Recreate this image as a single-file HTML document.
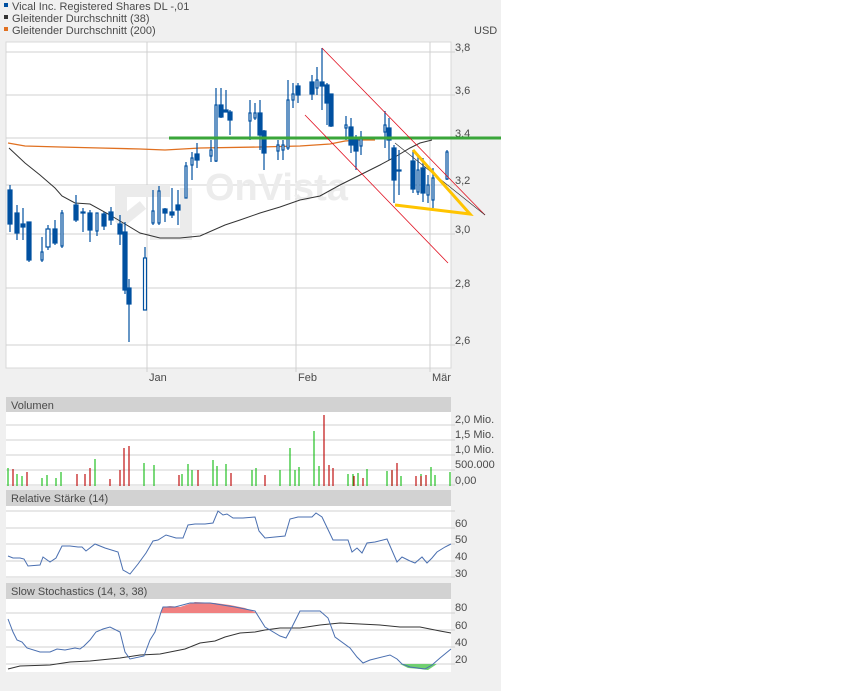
<!DOCTYPE html>
<html><head><meta charset="utf-8"><style>
html,body{margin:0;padding:0;background:#fff}
svg{display:block}
text{font-family:"Liberation Sans",sans-serif;font-size:11px;fill:#4a4a4a}
</style></head><body>
<svg width="850" height="691" xmlns="http://www.w3.org/2000/svg">
<rect x="0" y="0" width="501" height="691" fill="#f0f0f0"/>
<rect x="4" y="3" width="4" height="4" fill="#0050a0"/><text x="12" y="10">Vical Inc. Registered Shares DL -,01</text>
<rect x="4" y="15" width="4" height="4" fill="#333"/><text x="12" y="22">Gleitender Durchschnitt (38)</text>
<rect x="4" y="27" width="4" height="4" fill="#e07020"/><text x="12" y="34">Gleitender Durchschnitt (200)</text>
<text x="474" y="34">USD</text>
<rect x="6" y="42" width="445" height="326" fill="#fff" stroke="#d8d8d8"/>
<g stroke="#d0d0d0" stroke-width="1">
<line x1="6" y1="52" x2="455" y2="52"/><line x1="6" y1="95" x2="455" y2="95"/><line x1="6" y1="138" x2="455" y2="138"/>
<line x1="6" y1="185" x2="455" y2="185"/><line x1="6" y1="234" x2="455" y2="234"/><line x1="6" y1="288" x2="455" y2="288"/>
<line x1="6" y1="345" x2="455" y2="345"/>
<line x1="147" y1="42" x2="147" y2="372"/><line x1="296" y1="42" x2="296" y2="372"/><line x1="430" y1="42" x2="430" y2="372"/>
</g>
<g fill="#ebebeb">
<path d="M115 185 h55 v12 h-43 v23 l-12 0z"/>
<path d="M118 225 l25 -20" stroke="#ebebeb" stroke-width="10"/>
<path d="M150 228 h30 v-40 h12 v52 h-42z"/>
</g>
<text x="205" y="200" style="font-size:38px;font-weight:bold;fill:#ececec">OnVista</text>
<g font-size="11">
<text x="455" y="51">3,8</text><text x="455" y="94">3,6</text><text x="455" y="137">3,4</text>
<text x="455" y="184">3,2</text><text x="455" y="233">3,0</text><text x="455" y="287">2,8</text><text x="455" y="344">2,6</text>
<text x="149" y="381">Jan</text><text x="298" y="381">Feb</text><text x="432" y="381">Mär</text>
</g>
<polyline fill="none" stroke="#e07020" stroke-width="1.3" points="8,143 25,146 60,147 100,148 140,149 165,150 200,148 260,147 300,146 330,144 345,141 360,140 375,140"/>
<polyline fill="none" stroke="#333" stroke-width="1" points="9,148 25,163 40,175 55,188 62,196 75,203 90,204 110,215 125,224 140,233 160,238 180,238 200,236 225,225 240,220 260,213 280,207 300,200 320,196 340,185 360,175 380,165 395,157 410,148 420,143 432,140"/>
<g stroke="#0050a0" stroke-width="1.2" fill="#0050a0">
<line x1="10" y1="185" x2="10" y2="232"/><rect x="8" y="190" width="4" height="34"/>
<line x1="17" y1="205" x2="17" y2="240"/><rect x="15" y="213" width="4" height="20"/>
<line x1="23" y1="208" x2="23" y2="240"/><rect x="21" y="224" width="4" height="3"/>
<line x1="29" y1="222" x2="29" y2="262"/><rect x="27" y="222" width="4" height="38"/>
<line x1="42" y1="237" x2="42" y2="262"/><rect x="41" y="252" width="2" height="8" fill="#fff"/>
<line x1="48" y1="225" x2="48" y2="250"/><rect x="46" y="229" width="4" height="18" fill="#fff"/>
<line x1="55" y1="220" x2="55" y2="245"/><rect x="53" y="229" width="4" height="14"/>
<line x1="62" y1="210" x2="62" y2="248"/><rect x="61" y="213" width="2" height="33" fill="#fff"/>
<line x1="76" y1="195" x2="76" y2="222"/><rect x="74" y="205" width="4" height="15"/>
<line x1="83" y1="208" x2="83" y2="232"/><rect x="81" y="212" width="4" height="1"/>
<line x1="90" y1="210" x2="90" y2="242"/><rect x="88" y="213" width="4" height="17"/>
<line x1="97" y1="213" x2="97" y2="236"/><rect x="96" y="213" width="2" height="18" fill="#fff"/>
<line x1="104" y1="212" x2="104" y2="230"/><rect x="102" y="214" width="4" height="12"/>
<line x1="111" y1="207" x2="111" y2="225"/><rect x="109" y="212" width="4" height="8"/>
<line x1="120" y1="215" x2="120" y2="245"/><rect x="118" y="224" width="4" height="10"/>
<line x1="125" y1="222" x2="125" y2="294"/><rect x="123" y="232" width="4" height="58"/>
<line x1="129" y1="279" x2="129" y2="342"/><rect x="127" y="288" width="4" height="16"/>
<line x1="145" y1="247" x2="145" y2="310"/><rect x="143.5" y="258" width="3" height="52" fill="#fff"/>
<line x1="153" y1="190" x2="153" y2="225"/><rect x="152" y="211" width="2" height="12" fill="#fff"/>
<line x1="159" y1="186" x2="159" y2="225"/><rect x="158" y="191" width="2" height="32" fill="#fff"/>
<line x1="165" y1="208" x2="165" y2="222"/><rect x="163" y="209" width="4" height="4"/>
<line x1="172" y1="188" x2="172" y2="218"/><rect x="170" y="212" width="4" height="3"/>
<line x1="178" y1="190" x2="178" y2="225"/><rect x="176" y="205" width="4" height="5"/>
<line x1="186" y1="162" x2="186" y2="198"/><rect x="185" y="166" width="2" height="32" fill="#fff"/>
<line x1="192" y1="152" x2="192" y2="180"/><rect x="191" y="158" width="2" height="7" fill="#fff"/>
<line x1="197" y1="143" x2="197" y2="168"/><rect x="195" y="154" width="4" height="6"/>
<line x1="211" y1="140" x2="211" y2="162"/><rect x="210" y="150" width="2" height="6" fill="#fff"/>
<line x1="216" y1="88" x2="216" y2="162"/><rect x="215" y="105" width="2" height="56" fill="#fff"/>
<line x1="221" y1="88" x2="221" y2="118"/><rect x="219" y="105" width="4" height="12"/>
<line x1="226" y1="90" x2="226" y2="112"/><rect x="224" y="110" width="4" height="2"/>
<line x1="230" y1="110" x2="230" y2="135"/><rect x="228" y="112" width="4" height="8"/>
<line x1="250" y1="100" x2="250" y2="140"/><rect x="249" y="113" width="2" height="8" fill="#fff"/>
<line x1="255" y1="103" x2="255" y2="120"/><rect x="254" y="113" width="2" height="5" fill="#fff"/>
<line x1="260" y1="100" x2="260" y2="150"/><rect x="258" y="113" width="4" height="22"/>
<line x1="264" y1="130" x2="264" y2="170"/><rect x="262" y="131" width="4" height="22"/>
<line x1="278" y1="140" x2="278" y2="160"/><rect x="277" y="145" width="2" height="6" fill="#fff"/>
<line x1="283" y1="140" x2="283" y2="160"/><rect x="282" y="145" width="2" height="5" fill="#fff"/>
<line x1="288" y1="80" x2="288" y2="150"/><rect x="287" y="100" width="2" height="48" fill="#fff"/>
<line x1="293" y1="83" x2="293" y2="108"/><rect x="292" y="94" width="2" height="6" fill="#fff"/>
<line x1="298" y1="83" x2="298" y2="103"/><rect x="296" y="86" width="4" height="9"/>
<line x1="312" y1="75" x2="312" y2="100"/><rect x="310" y="82" width="4" height="12"/>
<line x1="317" y1="67" x2="317" y2="95"/><rect x="316" y="80" width="2" height="8" fill="#fff"/>
<line x1="322" y1="48" x2="322" y2="110"/><rect x="320" y="82" width="4" height="4"/>
<line x1="327" y1="83" x2="327" y2="125"/><rect x="325" y="85" width="4" height="18"/>
<line x1="331" y1="94" x2="331" y2="127"/><rect x="329" y="94" width="4" height="32"/>
<line x1="346" y1="116" x2="346" y2="140"/><rect x="345" y="125" width="2" height="3" fill="#fff"/>
<line x1="351" y1="118" x2="351" y2="153"/><rect x="349" y="127" width="4" height="18"/>
<line x1="356" y1="135" x2="356" y2="170"/><rect x="354" y="139" width="4" height="12"/>
<line x1="361" y1="131" x2="361" y2="155"/><rect x="360" y="137" width="2" height="9" fill="#fff"/>
<line x1="385" y1="111" x2="385" y2="148"/><rect x="384" y="125" width="2" height="7" fill="#fff"/>
<line x1="389" y1="118" x2="389" y2="160"/><rect x="387" y="128" width="4" height="12"/>
<line x1="394" y1="145" x2="394" y2="203"/><rect x="392" y="148" width="4" height="32"/>
<line x1="399" y1="150" x2="399" y2="195"/><rect x="397" y="170" width="4" height="1"/>
<line x1="413" y1="150" x2="413" y2="193"/><rect x="411" y="161" width="4" height="28"/>
<line x1="418" y1="155" x2="418" y2="195"/><rect x="417" y="170" width="2" height="22" fill="#fff"/>
<line x1="423" y1="158" x2="423" y2="202"/><rect x="421" y="168" width="4" height="25"/>
<line x1="428" y1="175" x2="428" y2="203"/><rect x="427" y="185" width="2" height="10" fill="#fff"/>
<line x1="433" y1="168" x2="433" y2="208"/><rect x="432" y="178" width="2" height="22" fill="#fff"/>
<line x1="447" y1="150" x2="447" y2="180"/><rect x="446" y="152" width="2" height="27" fill="#fff"/>
</g>
<line x1="169" y1="138" x2="501" y2="138" stroke="#3aa63a" stroke-width="3"/>
<line x1="322" y1="48" x2="485" y2="215" stroke="#e01020" stroke-width="0.8"/>
<line x1="305" y1="115" x2="448" y2="263" stroke="#e01020" stroke-width="0.8"/>
<line x1="395" y1="143" x2="485" y2="215" stroke="#333" stroke-width="0.7"/>
<polyline fill="none" stroke="#ffc400" stroke-width="3" points="413,150 470,214 395,205"/>
<rect x="6" y="397" width="445" height="15" fill="#d2d2d2"/><text x="11" y="409">Volumen</text>
<rect x="6" y="412" width="445" height="74" fill="#fff"/>
<g stroke="#d0d0d0"><line x1="6" y1="425" x2="455" y2="425"/><line x1="6" y1="440" x2="455" y2="440"/><line x1="6" y1="455" x2="455" y2="455"/><line x1="6" y1="470" x2="455" y2="470"/><line x1="6" y1="485" x2="455" y2="485"/></g>
<g stroke-width="1.2">
<path stroke="#22c022" d="M8 486V468M17 486V474M22 486V476M42 486V478M47 486V475M56 486V478M61 486V472M95 486V459M144 486V463M154 486V465M182 486V474M188 486V464M192 486V470M213 486V460M217 486V466M226 486V464M252 486V470M256 486V468M280 486V470M290 486V448M295 486V470M299 486V467M314 486V431M319 486V466M348 486V474M353 486V474M358 486V473M367 486V469M387 486V471M392 486V471M401 486V476M421 486V474M431 486V467M435 486V475M450 486V472"/>
<path stroke="#c01010" d="M13 486V469M27 486V472M77 486V474M85 486V474M90 486V468M110 486V479M120 486V470M124 486V448M129 486V446M179 486V475M198 486V470M231 486V473M265 486V475M324 486V415M329 486V465M333 486V468M354 486V476M363 486V478M392 486V470M397 486V463M416 486V476M421 486V476M426 486V475"/>
</g>
<text x="455" y="423">2,0 Mio.</text><text x="455" y="438">1,5 Mio.</text><text x="455" y="453">1,0 Mio.</text><text x="455" y="468">500.000</text><text x="455" y="484">0,00</text>
<rect x="6" y="490" width="445" height="16" fill="#d2d2d2"/><text x="11" y="502">Relative Stärke (14)</text>
<rect x="6" y="506" width="445" height="72" fill="#fff"/>
<g stroke="#d0d0d0"><line x1="6" y1="511" x2="455" y2="511"/><line x1="6" y1="528" x2="455" y2="528"/><line x1="6" y1="544" x2="455" y2="544"/><line x1="6" y1="561" x2="455" y2="561"/><line x1="6" y1="577" x2="455" y2="577"/></g>
<polyline fill="none" stroke="#4a6fb0" stroke-width="1" points="8,556 13,558 20,558 24,559 28,566 40,565 43,557 50,562 56,558 62,546 70,546 78,547 82,547 86,551 95,544 105,548 118,552 123,570 130,574 138,564 146,553 153,541 158,540 166,535 176,538 183,538 188,525 195,524 205,524 213,523 218,511 223,515 227,514 233,518 243,518 255,517 259,531 265,538 275,537 285,536 290,519 298,517 312,517 316,513 322,517 333,540 348,540 352,552 357,548 362,553 367,543 375,542 387,539 397,562 402,557 410,561 415,563 422,557 427,563 432,558 437,552 445,547 451,544"/>
<text x="455" y="527">60</text><text x="455" y="543">50</text><text x="455" y="560">40</text><text x="455" y="577">30</text>
<rect x="6" y="583" width="445" height="16" fill="#d2d2d2"/><text x="11" y="595">Slow Stochastics (14, 3, 38)</text>
<rect x="6" y="599" width="445" height="73" fill="#fff"/>
<g stroke="#d0d0d0"><line x1="6" y1="613" x2="455" y2="613"/><line x1="6" y1="630" x2="455" y2="630"/><line x1="6" y1="647" x2="455" y2="647"/><line x1="6" y1="664" x2="455" y2="664"/></g>
<path fill="#f08080" d="M161 613 L163 607 L170 606 L180 607 L195 602 L215 603 L230 605 L245 608 L257 613Z"/>
<path fill="#70d070" d="M400 664 L408 668 L420 669 L428 670 L437 664Z"/>
<polyline fill="none" stroke="#333" stroke-width="1" points="8,669 20,666 50,665 70,662 90,661 100,660 120,658 140,655 160,654 185,649 200,643 215,641 225,637 240,633 255,632 265,630 280,628 300,628 320,625 340,623 360,624 380,625 400,627 420,627 440,631 451,633"/>
<polyline fill="none" stroke="#4a6fb0" stroke-width="1" points="8,619 13,632 17,640 22,642 27,648 40,652 50,652 57,649 65,650 75,648 80,649 84,646 90,640 96,632 103,629 110,627 120,632 125,652 130,659 144,656 150,640 155,632 161,612 163,607 175,607 190,603 210,603 235,607 255,611 265,627 280,636 286,638 292,627 300,611 320,611 328,618 335,637 350,648 357,657 363,663 370,660 390,655 397,659 402,664 410,667 425,669 432,665 440,658 451,649"/>
<text x="455" y="611">80</text><text x="455" y="629">60</text><text x="455" y="646">40</text><text x="455" y="663">20</text>
</svg>
</body></html>
